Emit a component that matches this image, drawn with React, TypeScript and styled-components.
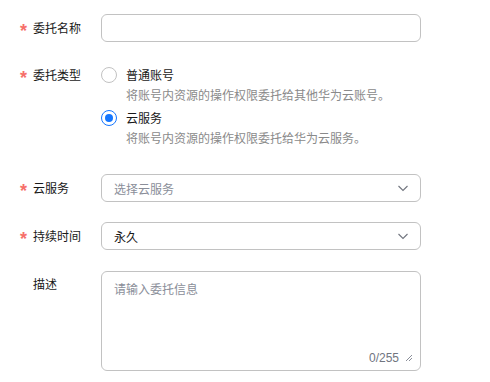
import React, { useState } from 'react';
import styled, { createGlobalStyle } from 'styled-components';

const GlobalStyle = createGlobalStyle`
  body {
    margin: 0;
    background: #fff;
    font-family: "Noto Sans CJK SC", "Noto Sans", sans-serif;
    color: #191919;
  }
`;

const Form = styled.div`
  display: grid;
  grid-template-columns: 81px 320px;
  row-gap: 20px;
  padding: 14px 0 0 20px;
`;

const Label = styled.div<{ $top?: number }>`
  display: flex;
  align-items: ${p => (p.$top !== undefined ? 'flex-start' : 'center')};
  padding-top: ${p => p.$top ?? 0}px;
  height: ${p => (p.$top !== undefined ? 'auto' : '28px')};
  font-size: 12px;
  line-height: 20px;
  color: #191919;
`;

const Star = styled.span`
  width: 13px;
  height: 20px;
  display: block;
  color: #f66f6a;
  font-family: "Liberation Sans", sans-serif;
  font-size: 18px;
  font-weight: 700;
  line-height: 20px;
  padding-top: 3px;
  box-sizing: border-box;
  overflow: visible;
  flex-shrink: 0;
`;

const Field = styled.div`
  box-sizing: border-box;
  height: 28px;
  border: 1px solid #c2c2c2;
  border-radius: 6px;
  display: flex;
  align-items: center;
  padding: 0 11px 0 12px;
  font-size: 12px;
  background: #fff;
`;

const Value = styled.span<{ $placeholder?: boolean }>`
  flex: 1;
  color: ${p => (p.$placeholder ? '#8a8e99' : '#191919')};
`;

const RadioGroup = styled.div`
  display: flex;
  flex-direction: column;
  gap: 3px;
  padding: 3px 0 6px;
`;

const RadioItem = styled.div`
  display: grid;
  grid-template-columns: 25px 1fr;
  font-size: 12px;
  line-height: 20px;
  cursor: pointer;
`;

const RadioCircle = styled.span<{ $checked: boolean }>`
  box-sizing: border-box;
  width: 16px;
  height: 16px;
  margin-top: 2px;
  border-radius: 50%;
  border: 1px solid ${p => (p.$checked ? '#1476ff' : '#c2c2c2')};
  display: flex;
  align-items: center;
  justify-content: center;
  &::after {
    content: '';
    width: 8px;
    height: 8px;
    border-radius: 50%;
    background: ${p => (p.$checked ? '#1476ff' : 'transparent')};
  }
`;

const RadioTitle = styled.span`
  color: #191919;
`;

const RadioDesc = styled.span`
  grid-column: 2;
  color: #8a8a8a;
`;

const TextArea = styled.div`
  position: relative;
  box-sizing: border-box;
  height: 100px;
  margin-top: 1px;
  border: 1px solid #c2c2c2;
  border-radius: 6px;
  padding: 8px 12px;
  font-size: 12px;
  line-height: 18px;
  color: #8a8e99;
`;

const Counter = styled.div`
  position: absolute;
  right: 7px;
  bottom: 3px;
  display: flex;
  align-items: center;
  gap: 6px;
  font-family: "Liberation Sans", sans-serif;
  font-size: 12px;
  color: #71757f;
`;

const Chevron = () => (
  <svg width="12" height="12" viewBox="0 0 12 12">
    <path d="M1.5 4l4.5 4.5L10.5 4" fill="none" stroke="#71757f" strokeWidth="1.1" />
  </svg>
);

const Grip = () => (
  <svg width="8" height="8" viewBox="0 0 8 8">
    <path d="M7 1L1 7M7 4L4 7" stroke="#8a8e99" strokeWidth="1" />
  </svg>
);

const types = [
  { key: 'account', title: '普通账号', desc: '将账号内资源的操作权限委托给其他华为云账号。' },
  { key: 'service', title: '云服务', desc: '将账号内资源的操作权限委托给华为云服务。' },
];

export default function App() {
  const [type, setType] = useState('service');
  return (
    <>
      <GlobalStyle />
      <Form>
        <Label><Star>*</Star>委托名称</Label>
        <Field />

        <Label $top={3}><Star>*</Star>委托类型</Label>
        <RadioGroup>
          {types.map(t => (
            <RadioItem key={t.key} onClick={() => setType(t.key)}>
              <RadioCircle $checked={type === t.key} />
              <RadioTitle>{t.title}</RadioTitle>
              <RadioDesc>{t.desc}</RadioDesc>
            </RadioItem>
          ))}
        </RadioGroup>

        <Label><Star>*</Star>云服务</Label>
        <Field>
          <Value $placeholder>选择云服务</Value>
          <Chevron />
        </Field>

        <Label><Star>*</Star>持续时间</Label>
        <Field>
          <Value>永久</Value>
          <Chevron />
        </Field>

        <Label $top={4}><Star />描述</Label>
        <TextArea>
          请输入委托信息
          <Counter>0/255<Grip /></Counter>
        </TextArea>
      </Form>
    </>
  );
}
